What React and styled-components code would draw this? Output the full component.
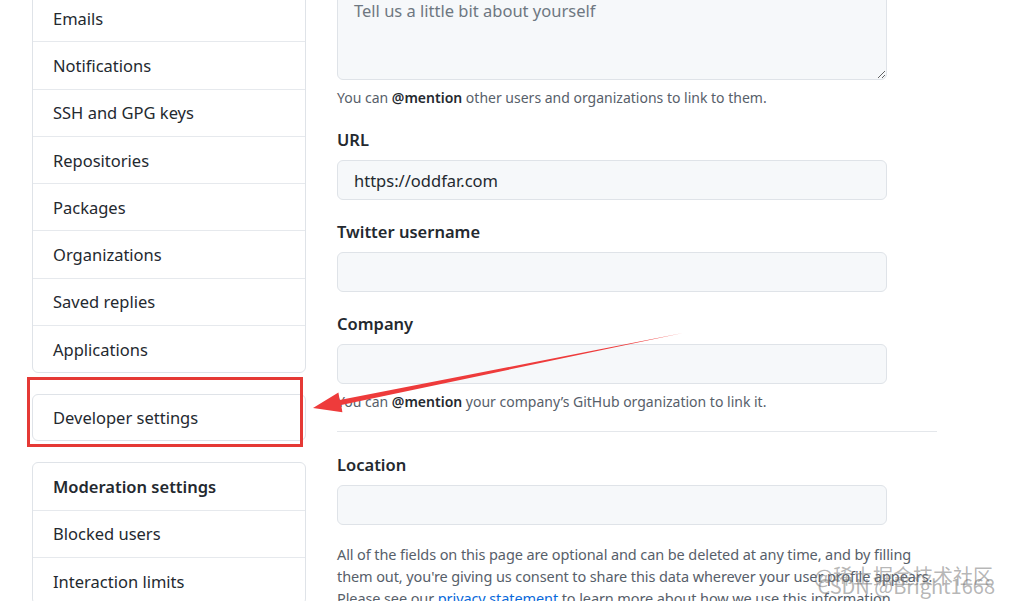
import React from 'react'
import styled, { createGlobalStyle } from 'styled-components'

const GlobalStyle = createGlobalStyle`
    html, body {
        margin: 0;
        padding: 0;
        background: #ffffff;
        overflow: hidden;
    }
    body {
        font-family: 'Noto Sans', 'Open Sans', sans-serif;
        color: #24292f;
    }
`

const accountItems = ['Emails', 'Notifications', 'SSH and GPG keys', 'Repositories', 'Packages', 'Organizations', 'Saved replies', 'Applications']
const moderationItems = ['Blocked users', 'Interaction limits']

export default function App() {
    return (
        <Screen>
            <GlobalStyle />
            <Page>
                <Sidebar>
                    <Menu>
                        {accountItems.map((item) => (
                            <MenuItem key={item}>{item}</MenuItem>
                        ))}
                    </Menu>
                    <Menu>
                        <MenuItem compact>Developer settings</MenuItem>
                    </Menu>
                    <Menu>
                        <MenuItem heading>Moderation settings</MenuItem>
                        {moderationItems.map((item) => (
                            <MenuItem key={item}>{item}</MenuItem>
                        ))}
                    </Menu>
                </Sidebar>

                <Main>
                    <TextArea placeholder="Tell us a little bit about yourself" />
                    <Note>You can <strong>@mention</strong> other users and organizations to link to them.</Note>

                    <Group>
                        <Label>URL</Label>
                        <Input defaultValue="https://oddfar.com" />
                    </Group>

                    <Group>
                        <Label>Twitter username</Label>
                        <Input />
                    </Group>

                    <Group>
                        <Label>Company</Label>
                        <Input />
                    </Group>
                    <Note>You can <strong>@mention</strong> your company’s GitHub organization to link it.</Note>

                    <Divider />

                    <Group afterDivider>
                        <Label>Location</Label>
                        <Input />
                    </Group>

                    <Paragraph>
                        <Line>All of the fields on this page are optional and can be deleted at any time, and by filling</Line>
                        <Line>them out, you're giving us consent to share this data wherever your user profile appears.</Line>
                        <Line>Please see our <Link href="#">privacy statement</Link> to learn more about how we use this information.</Line>
                    </Paragraph>
                </Main>
            </Page>

            <Highlight />
            <Arrow viewBox="0 0 1009 601" width="1009" height="601">
                <polygon fill="#ee3b3b" points="683,333 341.2,405 342.4,412.2 313,408 338.4,392.6 339.7,400" />
            </Arrow>
            <Watermark>
                <span>@稀土掘金技术社区</span>
                <span>CSDN @Bright1668</span>
            </Watermark>
        </Screen>
    )
}

const Screen = styled.div`
    position: relative;
    width: 1009px;
    height: 601px;
    overflow: hidden;
`

const Page = styled.div`
    display: flex;
    align-items: flex-start;
    gap: 31px;
    padding-left: 32px;
    margin-top: -6px;
`

const Sidebar = styled.nav`
    width: 274px;
    display: flex;
    flex-direction: column;
    gap: 21px;
`

const Menu = styled.div`
    border: 1px solid #dfe3e8;
    border-radius: 6px;
    overflow: hidden;
    background: #fff;
`

const MenuItem = styled.div`
    height: ${(p) => (p.compact ? '45px' : '46.3px')};
    display: flex;
    align-items: center;
    padding-left: 20px;
    font-size: 16.5px;
    font-weight: ${(p) => (p.heading ? 600 : 400)};
    color: #24292f;
    border-top: 1px solid #e6e9ed;

    &:first-child {
        border-top: none;
    }
`

const Main = styled.div`
    width: 600px;
    display: flex;
    flex-direction: column;
    align-items: flex-start;
`

const fieldBox = `
    width: 550px;
    box-sizing: border-box;
    background: #f6f8fa;
    border: 1px solid #dfe3e8;
    border-radius: 6px;
    font-family: 'Noto Sans', 'Open Sans', sans-serif;
    font-size: 16.5px;
    color: #24292f;
    padding: 0 16px;
    outline: none;

    &::placeholder {
        color: #6e7781;
    }
`

const TextArea = styled.textarea`
    ${fieldBox}
    height: 86px;
    padding-top: 4px;
    line-height: 24px;
    resize: vertical;
`

const Input = styled.input`
    ${fieldBox}
    height: 40px;
`

const Note = styled.p`
    margin: 8px 0 0;
    font-size: 14px;
    line-height: 20px;
    color: #57606a;

    strong {
        font-weight: 600;
        color: #24292f;
    }
`

const Group = styled.div`
    margin-top: ${(p) => (p.afterDivider ? '21px' : '20px')};
    display: flex;
    flex-direction: column;
`

const Label = styled.label`
    font-size: 16.5px;
    font-weight: 600;
    line-height: 24px;
    margin-bottom: 8px;
    color: #24292f;
`

const Divider = styled.hr`
    width: 600px;
    margin: 19px 0 0;
    border: none;
    border-top: 1px solid #e4e7eb;
`

const Paragraph = styled.p`
    margin: 18px 0 0;
    font-size: 14.5px;
    line-height: 22px;
    letter-spacing: -0.1px;
    color: #57606a;
`

const Line = styled.span`
    display: block;
    white-space: nowrap;
`

const Link = styled.a`
    color: #0969da;
    text-decoration: none;
`

const Highlight = styled.div`
    position: absolute;
    left: 27px;
    top: 377px;
    width: 276px;
    height: 70px;
    box-sizing: border-box;
    border: 3px solid #e53935;
    pointer-events: none;
`

const Arrow = styled.svg`
    position: absolute;
    left: 0;
    top: 0;
    pointer-events: none;
`

const Watermark = styled.div`
    position: absolute;
    right: 14px;
    bottom: 10px;
    display: flex;
    flex-direction: column;
    align-items: flex-end;
    font-family: 'Noto Sans CJK SC', 'Noto Sans', sans-serif;
    font-size: 20px;
    line-height: 10px;
    color: rgba(120, 120, 120, 0.55);
    pointer-events: none;

    span:first-child {
        margin-right: 2px;
    }
`
